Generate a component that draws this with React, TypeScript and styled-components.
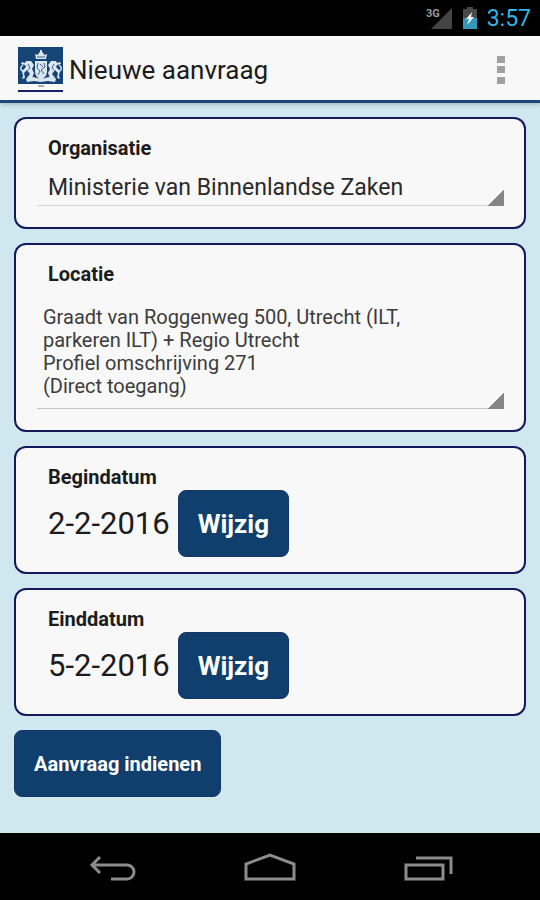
import React, { useState } from "react";
import styled, { createGlobalStyle } from "styled-components";

const GlobalStyle = createGlobalStyle`
  *, *::before, *::after { box-sizing: border-box; }
  body { margin: 0; background: #cfe8f0; }
  body, button, select { font-family: Roboto, "Liberation Sans", sans-serif; }
`;

const Screen = styled.div`
  display: flex;
  flex-direction: column;
  min-height: 100vh;
  color: #1c1c1c;
`;

const StatusBar = styled.div`
  display: flex;
  align-items: center;
  justify-content: flex-end;
  height: 36px;
  padding-right: 9px;
  background: #000;
`;

const Signal = styled.svg`
  width: 28px;
  height: 26px;
  margin-right: 8px;
`;

const Battery = styled.svg`
  width: 16px;
  height: 24px;
  margin-right: 9px;
`;

const Clock = styled.time`
  color: #33b5e5;
  font-size: 23px;
  line-height: 28px;
  padding-top: 2px;
`;

const ActionBar = styled.header`
  display: flex;
  align-items: center;
  height: 67px;
  padding: 2px 24px 0 18px;
  background: #f8f8f8;
  border-top: 1px solid #fff;
  border-bottom: 3px solid #1b4876;
  box-shadow: 0 1px 5px rgba(0, 0, 0, 0.25);
`;

const Crest = styled.svg`
  width: 45px;
  height: 46px;
  margin-right: 6px;
`;

const Title = styled.h1`
  flex: 1;
  margin: 0;
  font-size: 26px;
  line-height: 32px;
  font-weight: 400;
`;

const OverflowButton = styled.button`
  display: flex;
  padding: 10px;
  border: 0;
  background: none;
  cursor: pointer;
`;

const Form = styled.form`
  flex: 1;
  display: flex;
  flex-direction: column;
  align-items: stretch;
  gap: 14px;
  padding: 14px;
`;

const Card = styled.section<{ $compact?: boolean }>`
  display: flex;
  flex-direction: column;
  padding: 17px 20px ${(p) => (p.$compact ? 15 : 21)}px 21px;
  border: 2px solid #14195e;
  border-radius: 12px;
  background: #f8f8f8;
`;

const Label = styled.label`
  padding-left: 11px;
  font-size: 20px;
  line-height: 24px;
  font-weight: 700;
`;

const corner = `
  linear-gradient(135deg, transparent 50%, #858585 50%) right bottom / 16px 16px no-repeat
`;

const OrganisationSelect = styled.select`
  appearance: none;
  width: 100%;
  height: 38px;
  margin-top: 8px;
  padding: 0 24px 0 11px;
  border: 0;
  border-radius: 0;
  background: ${corner}, linear-gradient(#d6d6d6, #d6d6d6) left bottom / 100% 1px no-repeat;
  color: #2a2a2a;
  font-size: 23px;
`;

const LocationField = styled.div`
  display: grid;
  margin-top: 16px;
  padding-bottom: 11px;
  background: ${corner}, linear-gradient(#c4c4c4, #c4c4c4) left bottom / 100% 1px no-repeat;
  &:focus-within { outline: 2px solid #33b5e5; }
`;

const LocationText = styled.span`
  grid-area: 1 / 1;
  max-width: 400px;
  padding: 4px 0 0 6px;
  color: #3c3c3c;
  font-size: 20px;
  line-height: 23px;
  white-space: pre-line;
`;

/* Invisible native control stacked on the wrapped text, which a select cannot show itself. */
const LocationSelect = styled.select`
  grid-area: 1 / 1;
  width: 100%;
  opacity: 0;
  cursor: pointer;
`;

const DateRow = styled.div`
  display: flex;
  align-items: center;
  gap: 8px;
  margin-top: 1px;
  padding-left: 11px;
`;

const DateValue = styled.output`
  font-size: 31px;
  line-height: 36px;
`;

const Button = styled.button<{ $small?: boolean }>`
  align-self: flex-start;
  padding: 20px 19px 18px;
  border: 1px solid #153768;
  border-radius: 8px;
  background: #103f6e;
  color: #fff;
  font-size: ${(p) => (p.$small ? 20 : 26)}px;
  line-height: 27px;
  font-weight: 700;
  cursor: pointer;
`;

const NavBar = styled.nav`
  display: flex;
  justify-content: center;
  gap: 84px;
  height: 67px;
  background: #000;
`;

const NavButton = styled.button`
  display: grid;
  place-items: center;
  width: 74px;
  padding: 2px 0 0;
  border: 0;
  background: none;
  cursor: pointer;
  svg { fill: none; stroke: #8c8c8c; stroke-width: 3; }
`;

const locations = [
  "Graadt van Roggenweg 500, Utrecht (ILT, parkeren ILT) + Regio Utrecht\nProfiel omschrijving 271\n(Direct toegang)",
];

function CrestIcon() {
  return (
    <Crest viewBox="0 0 45 46" role="img" aria-label="Rijksoverheid">
      <path fill="#174477" d="M0 0h45v37H0z" />
      <path fill="#17206a" d="M0 43h45v2H0z" />
      <path fill="#a9afb9" d="M20 38h6v2h-6z" />
      <g fill="#dce6ef">
        <path d="M18 12l-1-5 3 1 1-3 1 1V3h2v3l1-1 1 3 3-1-1 5z" />
        <path d="M17 14h12v10c0 5-3 7-6 9-3-2-6-4-6-9z" />
        <path d="M13 14l3 4-2 4 2 4-2 5-6 1 4-5-3-4-3 3 1 5-3 1 1-3-1-5 4-4-1-2-4-1 1-2 3 1 1-2z" />
        <path d="M33 14l-3 4 2 4-2 4 2 5 6 1-4-5 3-4 3 3-1 5 3 1-1-3 1-5-4-4 1-2 4-1-1-2-3 1-1-2z" />
        <path d="M8 32l7-2 8 2 8-2 7 2-1 3-7-1-7 1-7-1-7 1z" />
      </g>
      <g fill="none" stroke="#3e638b">
        <path d="M19 10h8M20 16l-1 5 3 3-2 4M26 16l1 4-4 3 3 4M22 17l3 3M10 17l2 4-2 2M36 17l-2 4 2 2" />
      </g>
      <path fill="none" stroke="#dce6ef" strokeWidth="1.5" d="M5 24c-3-1-3-4 0-6M41 24c3-1 3-4 0-6" />
    </Crest>
  );
}

function DateCard({ id, label, value }: { id: string; label: string; value: string }) {
  return (
    <Card $compact>
      <Label htmlFor={id}>{label}</Label>
      <DateRow>
        <DateValue id={id}>{value}</DateValue>
        <Button type="button" aria-label={`Wijzig ${label.toLowerCase()}`}>Wijzig</Button>
      </DateRow>
    </Card>
  );
}

export default function App() {
  const [location, setLocation] = useState(locations[0]);

  return (
    <Screen>
      <GlobalStyle />
      <StatusBar>
        <Signal viewBox="0 0 28 26" role="img" aria-label="3G">
          <path fill="#444" d="M26 3v21H5z" />
          <text x="0" y="12" fill="#999" fontSize="11" fontWeight="700" fontFamily="Roboto, sans-serif">3G</text>
        </Signal>
        <Battery viewBox="0 0 16 24" role="img" aria-label="Batterij laadt op">
          <path fill="#484848" d="M5 1h6v2h4v10H1V3h4z" />
          <path fill="#3299bd" d="M1 12h14v11H1z" />
          <path fill="#f4f4f4" d="M10 6L4 13h3l-2 6 7-8H9z" />
        </Battery>
        <Clock>3:57</Clock>
      </StatusBar>

      <ActionBar>
        <CrestIcon />
        <Title>Nieuwe aanvraag</Title>
        <OverflowButton type="button" aria-label="Meer opties">
          <svg width="10" height="30" viewBox="0 0 10 30" fill="#a0a0a0">
            <path d="M1 1h8v7H1zM1 11h8v7H1zM1 22h8v7H1z" />
          </svg>
        </OverflowButton>
      </ActionBar>

      <Form onSubmit={(e) => e.preventDefault()}>
        <Card>
          <Label htmlFor="organisatie">Organisatie</Label>
          <OrganisationSelect id="organisatie">
            <option>Ministerie van Binnenlandse Zaken</option>
          </OrganisationSelect>
        </Card>

        <Card>
          <Label htmlFor="locatie">Locatie</Label>
          <LocationField>
            <LocationText aria-hidden="true">{location}</LocationText>
            <LocationSelect id="locatie" value={location} onChange={(e) => setLocation(e.target.value)}>
              {locations.map((item) => (
                <option key={item} value={item}>{item}</option>
              ))}
            </LocationSelect>
          </LocationField>
        </Card>

        <DateCard id="begindatum" label="Begindatum" value="2-2-2016" />
        <DateCard id="einddatum" label="Einddatum" value="5-2-2016" />

        <Button type="submit" $small>Aanvraag indienen</Button>
      </Form>

      <NavBar aria-label="Systeemnavigatie">
        <NavButton type="button" aria-label="Terug">
          <svg width="48" height="30" viewBox="0 0 48 30">
            <path d="M12 4L4 12l8 8M4 12h35a7 7 0 0 1 0 14H23" />
          </svg>
        </NavButton>
        <NavButton type="button" aria-label="Startscherm">
          <svg width="52" height="30" viewBox="0 0 52 30">
            <path d="M2 26V11l24-9 24 9v15z" />
          </svg>
        </NavButton>
        <NavButton type="button" aria-label="Recente apps">
          <svg width="50" height="30" viewBox="0 0 50 30">
            <path d="M3 12h37v14H3zM13 5h35v16" />
          </svg>
        </NavButton>
      </NavBar>
    </Screen>
  );
}
